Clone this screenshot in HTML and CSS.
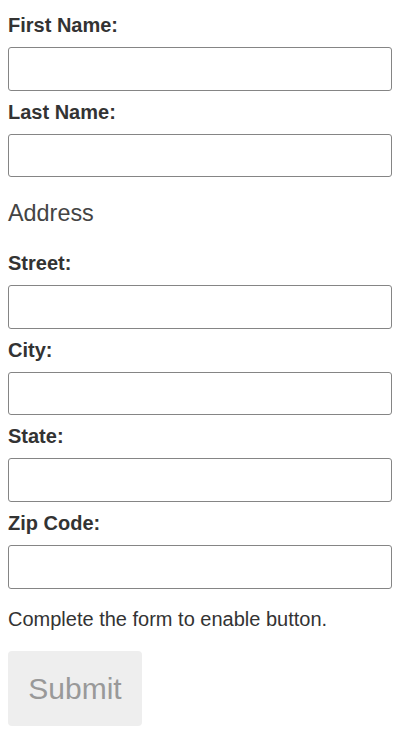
FILE: index.html
```html
<!DOCTYPE html>
<html>
<head>
<meta charset="utf-8">
<link rel="stylesheet" href="styles.css">
</head>
<body>
<form class="form">
  <div class="field">
    <label class="label">First Name:</label>
    <input class="input" type="text">
  </div>
  <div class="field">
    <label class="label">Last Name:</label>
    <input class="input" type="text">
  </div>
  <div class="section">Address</div>
  <div class="field">
    <label class="label">Street:</label>
    <input class="input" type="text">
  </div>
  <div class="field">
    <label class="label">City:</label>
    <input class="input" type="text">
  </div>
  <div class="field">
    <label class="label">State:</label>
    <input class="input" type="text">
  </div>
  <div class="field">
    <label class="label">Zip Code:</label>
    <input class="input" type="text">
  </div>
  <p class="hint">Complete the form to enable button.</p>
  <button class="submit" type="button" disabled>Submit</button>
</form>
</body>
</html>
```
FILE: styles.css
```css
html, body {
  margin: 0;
  padding: 0;
  background: #fff;
}
body {
  font-family: "Liberation Sans", Arial, Helvetica, sans-serif;
  color: #333;
}
.form {
  display: flex;
  flex-direction: column;
  padding: 14px 8px 0 8px;
}
.field {
  display: flex;
  flex-direction: column;
  gap: 10px;
  margin-bottom: 10px;
}
.label {
  font-size: 20px;
  line-height: 23px;
  font-weight: bold;
  color: #333;
}
.input {
  box-sizing: border-box;
  width: 100%;
  height: 43.6px;
  margin: 0;
  border: 1px solid #858585;
  border-radius: 3px;
  background: #fff;
  font-size: 20px;
  padding: 0 8px;
}
.section {
  font-size: 23.4px;
  line-height: 27px;
  color: #444;
  margin: 13px 0 25px 0;
}
.hint {
  font-size: 20px;
  line-height: 23px;
  color: #333;
  margin: 9px 0 20px 0;
}
.submit {
  align-self: flex-start;
  font-family: "Liberation Sans", Arial, Helvetica, sans-serif;
  font-size: 30px;
  line-height: 35px;
  color: #999;
  background: #eee;
  border: none;
  border-radius: 4px;
  padding: 20px 20px;
  width: 134px;
  height: 75px;
}
```
